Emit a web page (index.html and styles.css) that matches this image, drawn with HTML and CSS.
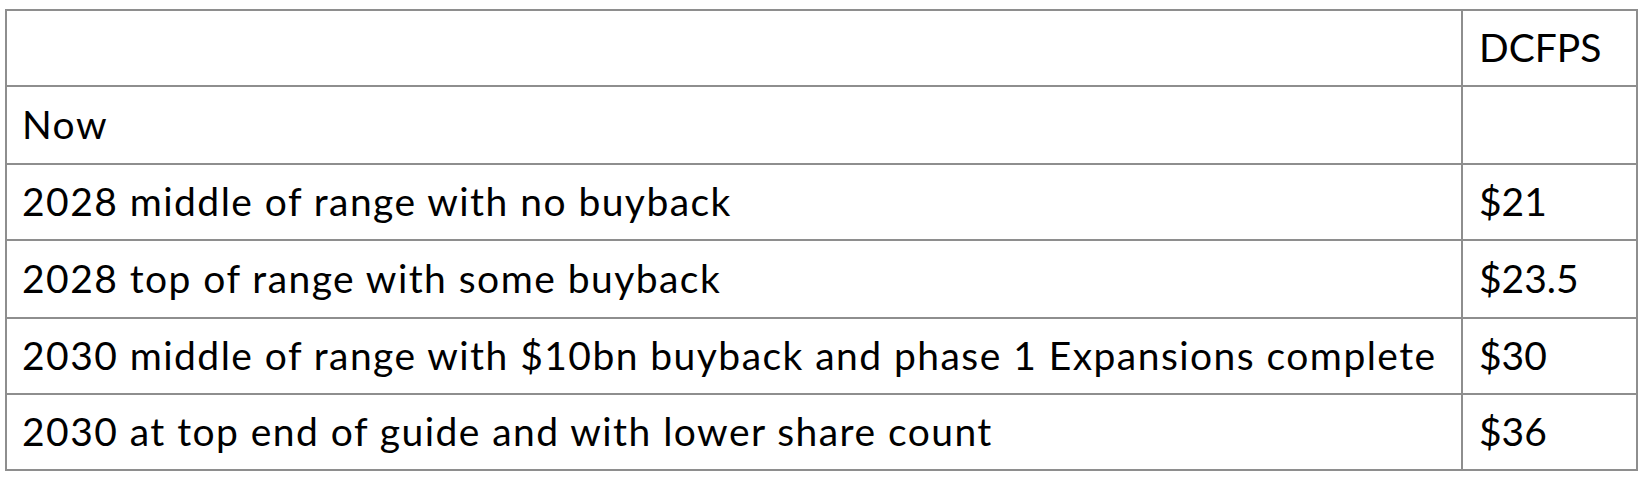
FILE: index.html
```html
<!DOCTYPE html>
<html>
<head>
<meta charset="utf-8">
<link rel="stylesheet" href="styles.css">
</head>
<body>
<div class="table">
  <div class="cell r1"></div><div class="cell val r1">DCFPS</div>
  <div class="cell r2">Now</div><div class="cell val r2"></div>
  <div class="cell r1">2028 middle of range with no buyback</div><div class="cell val r1">$21</div>
  <div class="cell r2">2028 top of range with some buyback</div><div class="cell val r2">$23.5</div>
  <div class="cell r1">2030 middle of range with $10bn buyback and phase 1 Expansions complete</div><div class="cell val r1">$30</div>
  <div class="cell r1">2030 at top end of guide and with lower share count</div><div class="cell val r1">$36</div>
</div>
</body>
</html>
```
FILE: styles.css
```css
html, body {
  margin: 0;
  padding: 0;
  background: #ffffff;
}
body {
  padding: 9px 0 0 5px;
}
.table {
  display: grid;
  grid-template-columns: 1456px 175px;
  width: 1633px;
  box-sizing: border-box;
  border-top: 2px solid #8e8e8e;
  border-left: 2px solid #8e8e8e;
  font-family: Lato, "Liberation Sans", sans-serif;
  font-size: 39px;
  color: #000;
}
.cell {
  box-sizing: border-box;
  border-right: 2px solid #8e8e8e;
  border-bottom: 2px solid #8e8e8e;
  display: flex;
  align-items: center;
  padding: 0 0 2px 15px;
  white-space: nowrap;
  letter-spacing: 1.45px;
}
.cell.val {
  padding-left: 16px;
  letter-spacing: 0;
}
.r1 { height: 76px; }
.r2 { height: 78px; }
```
